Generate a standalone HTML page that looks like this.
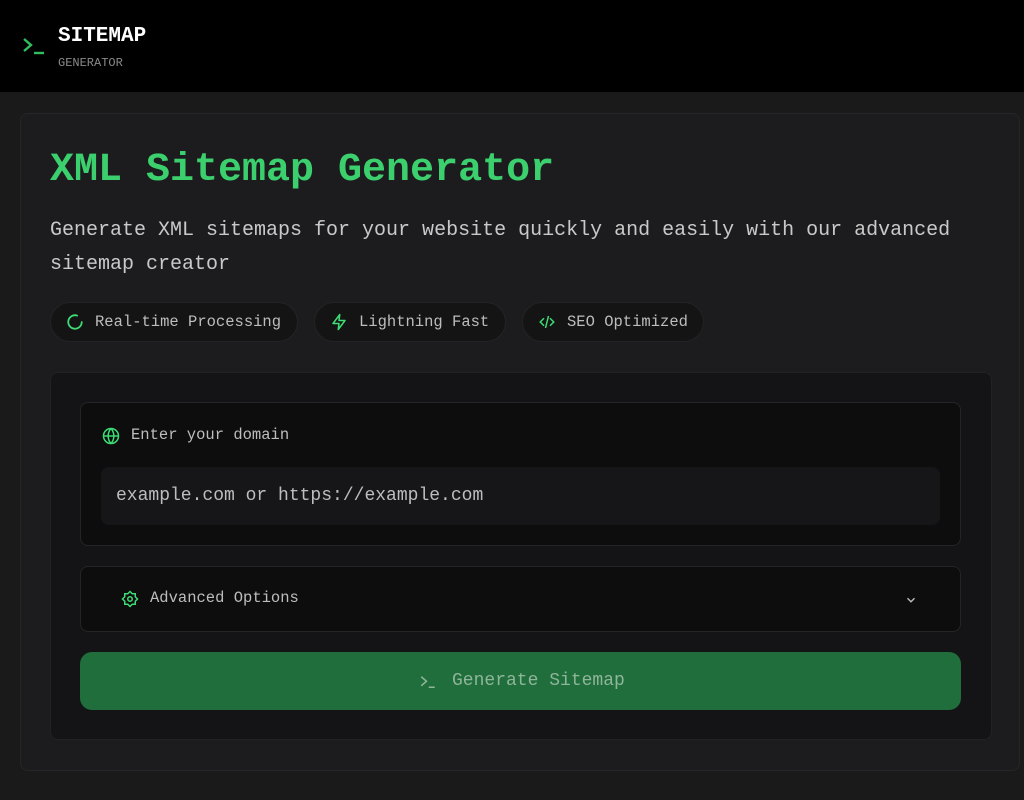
<!DOCTYPE html>
<html><head><style>
*{margin:0;padding:0;box-sizing:border-box}
body{width:1024px;height:800px;background:#1a1a1b;font-family:"Liberation Mono",monospace;overflow:hidden;position:relative}
.hdr{position:absolute;left:0;top:0;width:1024px;height:92px;background:#000}
.abs{position:absolute}
.card{left:20px;top:113px;width:1000px;height:658px;background:#1c1c1e;border:1px solid #262628;border-radius:8px}
h1{position:absolute;left:50px;top:148px;font-size:40px;font-weight:bold;color:#3ccf6d;white-space:nowrap}
.sub{position:absolute;left:50px;top:214px;font-size:20px;line-height:34px;color:#c9c9c9;width:940px}
.chip{position:absolute;top:302px;height:40px;border-radius:20px;background:#141415;border:1px solid #232325;color:#bdbdbd;font-size:15.5px;display:flex;align-items:center;padding-left:15px;gap:11px}
.panel{left:50px;top:372px;width:942px;height:368px;background:#141416;border:1px solid #222;border-radius:8px}
.box{left:80px;width:881px;background:#0d0d0e;border:1px solid #252527;border-radius:8px}
</style></head><body>
<div class="hdr"></div>
<svg class="abs" style="left:22px;top:36px" width="24" height="20" viewBox="0 0 24 20"><path d="M2 3l7 6-7 6" stroke="#2fbf5f" stroke-width="2.4" fill="none"/><path d="M12 17h10" stroke="#2fbf5f" stroke-width="2.4"/></svg>
<div class="abs" style="left:58px;top:25px;font-size:21px;font-weight:bold;color:#fff">SITEMAP</div>
<div class="abs" style="left:58px;top:56px;font-size:12px;color:#8a8a8a">GENERATOR</div>
<div class="abs card"></div>
<h1>XML Sitemap Generator</h1>
<div class="sub">Generate XML sitemaps for your website quickly and easily with our advanced sitemap creator</div>
<div class="chip" style="left:50px;width:248px"><svg width="18" height="18" viewBox="0 0 24 24"><path d="M21 12a9 9 0 1 1-6.2-8.6" stroke="#3ddc74" stroke-width="2.4" fill="none" stroke-linecap="round"/></svg>Real-time Processing</div>
<div class="chip" style="left:314px;width:192px"><svg width="18" height="18" viewBox="0 0 24 24"><path d="M13 2L4 14h8l-1 8 9-12h-8z" stroke="#3ddc74" stroke-width="2" fill="none" stroke-linejoin="round"/></svg>Lightning Fast</div>
<div class="chip" style="left:522px;width:182px"><svg width="18" height="18" viewBox="0 0 24 24"><path d="M8 7l-5 5 5 5M16 7l5 5-5 5M14 4l-4 16" stroke="#3ddc74" stroke-width="2" fill="none"/></svg>SEO Optimized</div>
<div class="abs panel"></div>
<div class="abs box" style="top:402px;height:144px"></div>
<svg class="abs" style="left:102px;top:427px" width="18" height="18" viewBox="0 0 24 24" fill="none" stroke="#3ddc74" stroke-width="2"><circle cx="12" cy="12" r="10"/><path d="M2 12h20M12 2a15 15 0 0 1 0 20M12 2a15 15 0 0 0 0 20"/></svg>
<div class="abs" style="left:131px;top:426px;font-size:15.5px;color:#bdbdbd">Enter your domain</div>
<div class="abs" style="left:101px;top:467px;width:839px;height:58px;background:#161618;border-radius:8px"></div>
<div class="abs" style="left:116px;top:486px;font-size:18px;color:#bdbdbd">example.com or https://example.com</div>
<div class="abs box" style="top:566px;height:66px"></div>
<svg class="abs" style="left:121px;top:590px" width="18" height="18" viewBox="0 0 24 24" fill="none" stroke="#3ddc74" stroke-width="2"><circle cx="12" cy="12" r="3"/><path d="M12 2l3 3h4v4l3 3-3 3v4h-4l-3 3-3-3H5v-4l-3-3 3-3V5h4z"/></svg>
<div class="abs" style="left:150px;top:589px;font-size:15.5px;color:#bdbdbd">Advanced Options</div>
<svg class="abs" style="left:904px;top:593px" width="14" height="14" viewBox="0 0 24 24"><path d="M6 9l6 6 6-6" stroke="#bbb" stroke-width="2.4" fill="none"/></svg>
<div class="abs" style="left:80px;top:652px;width:881px;height:58px;background:#1f6e3b;border-radius:12px"></div>
<svg class="abs" style="left:419px;top:674px" width="18" height="16" viewBox="0 0 24 20"><path d="M3 3l7 6-7 6" stroke="#8fb59a" stroke-width="2" fill="none"/><path d="M13 17h8" stroke="#8fb59a" stroke-width="2"/></svg>
<div class="abs" style="left:452px;top:671px;font-size:18px;color:#8fb59a">Generate Sitemap</div>
</body></html>
